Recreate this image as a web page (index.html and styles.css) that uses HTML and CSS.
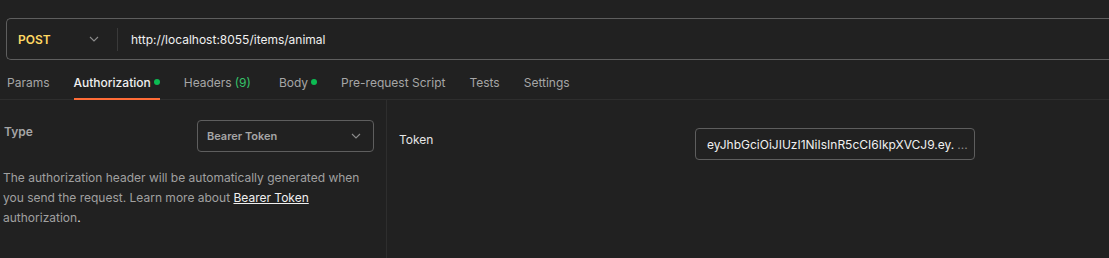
FILE: index.html
```html
<!DOCTYPE html>
<html lang="en">
<head>
    <meta charset="UTF-8">
    <meta name="viewport" content="width=device-width, initial-scale=1.0">
    <title>Request - Authorization</title>
    <link rel="stylesheet" href="styles.css">
</head>
<body>
    <div class="url-bar">
        <div class="method">
            <span class="method-name">POST</span>
            <svg class="chevron" width="10" height="6" viewBox="0 0 10 6"><path d="M1 1l4 4 4-4" fill="none" stroke="#8c8c8c" stroke-width="1.1"/></svg>
        </div>
        <div class="divider"></div>
        <div class="url">http://localhost:8055/items/animal</div>
    </div>

    <div class="tabs">
        <div class="tab">Params</div>
        <div class="tab active">Authorization <span class="dot"></span></div>
        <div class="tab">Headers <span class="count">(9)</span></div>
        <div class="tab">Body <span class="dot"></span></div>
        <div class="tab">Pre-request Script</div>
        <div class="tab">Tests</div>
        <div class="tab">Settings</div>
    </div>

    <div class="content">
        <div class="left-pane">
            <div class="type-row">
                <span class="type-label">Type</span>
                <div class="select">
                    <span>Bearer Token</span>
                    <svg width="10" height="6" viewBox="0 0 10 6"><path d="M1 1l4 4 4-4" fill="none" stroke="#8c8c8c" stroke-width="1.1"/></svg>
                </div>
            </div>
            <p class="description">
                The authorization header will be automatically generated when you send the request. Learn more about <a href="#">Bearer Token</a> authorization<span class="bright">.</span>
            </p>
        </div>
        <div class="right-pane">
            <span class="token-label">Token</span>
            <div class="token-input">
                <span class="token-text">eyJhbGciOiJIUzI1NiIsInR5cCI6IkpXVCJ9.ey.</span>
                <span class="token-more">...</span>
            </div>
        </div>
    </div>
</body>
</html>
```

FILE: styles.css
```css
* {
    margin: 0;
    padding: 0;
    box-sizing: border-box;
}
body {
    background-color: #212121;
    font-family: Inter, "Noto Sans", sans-serif;
    font-size: 12px;
    color: #a6a6a6;
    overflow: hidden;
}
.url-bar {
    display: flex;
    align-items: center;
    height: 42px;
    margin: 18px 0 0 6px;
    border: 1px solid #5e5e5e;
    border-right: none;
    border-radius: 5px 0 0 5px;
}
.method {
    display: flex;
    align-items: center;
    justify-content: space-between;
    width: 103px;
    padding: 0 11px;
}
.method-name {
    color: #ffd863;
    font-weight: 600;
}
.divider {
    width: 1px;
    height: 23px;
    background-color: #3a3a3a;
    margin-left: 7px;
}
.url {
    color: #f0f0f0;
    margin-left: 13px;
}
.tabs {
    display: flex;
    align-items: stretch;
    height: 40px;
    border-bottom: 1px solid #2e2e2e;
    padding-left: 7px;
}
.tab {
    display: flex;
    align-items: center;
    gap: 3px;
    margin-right: 24px;
    border-bottom: 2px solid transparent;
    margin-bottom: -1px;
    padding-top: 6px;
}
.tab.active {
    color: #f0f0f0;
    border-bottom-color: #ff6c37;
    font-weight: 500;
}
.dot {
    width: 6px;
    height: 6px;
    border-radius: 50%;
    background-color: #0cbb52;
}
.count {
    color: #36c26a;
    margin-right: 4px;
}
.content {
    display: flex;
    height: 158px;
}
.left-pane {
    width: 387px;
    border-right: 1px solid #2e2e2e;
    padding: 20px 12px 0 3px;
}
.type-row {
    display: flex;
    justify-content: space-between;
    align-items: flex-start;
}
.type-label {
    font-weight: 600;
    color: #a6a6a6;
    padding: 4px 0 0 1px;
}
.select {
    display: flex;
    align-items: center;
    justify-content: space-between;
    width: 177px;
    height: 32px;
    padding: 0 12px 0 9px;
    border: 1px solid #5e5e5e;
    border-radius: 4px;
    font-size: 11px;
    font-weight: 600;
    color: #a6a6a6;
}
.description {
    margin-top: 16px;
    line-height: 20px;
    color: #a0a0a0;
}
.description a {
    color: #f0f0f0;
}
.bright {
    color: #f0f0f0;
}
.right-pane {
    display: flex;
    align-items: flex-start;
    padding: 28px 0 0 12px;
}
.token-label {
    width: 296px;
    color: #e6e6e6;
    padding-top: 4px;
}
.token-input {
    display: flex;
    align-items: center;
    width: 280px;
    height: 32px;
    padding: 0 9px 0 11px;
    border: 1px solid #5e5e5e;
    border-radius: 4px;
    color: #f0f0f0;
}
.token-text {
    white-space: nowrap;
}
.token-more {
    color: #8c8c8c;
    margin-left: 3px;
}
```
